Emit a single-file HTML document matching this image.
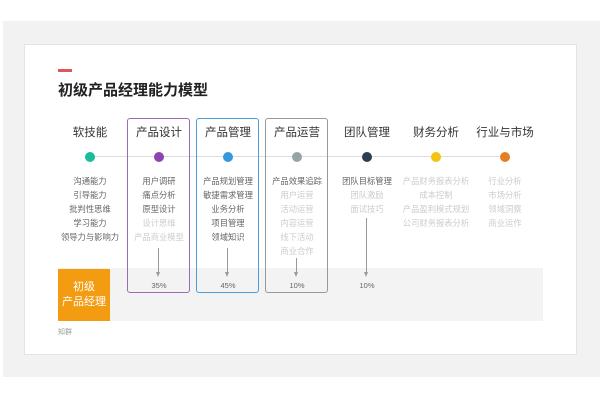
<!DOCTYPE html><html><head><meta charset="utf-8"><style>
*{margin:0;padding:0;box-sizing:border-box}
body{width:600px;height:400px;background:#fff;position:relative;overflow:hidden;font-family:"Liberation Sans","Noto Sans CJK SC",sans-serif}
.a{position:absolute}
.band{left:3px;top:21px;width:597px;height:356px;background:#f2f2f2}
.card{left:24px;top:44px;width:553px;height:311px;background:#fff;border:1px solid #e4e4e4}
.h{width:80px;text-align:center;font-size:11.5px;color:#333;top:124px}
.dot{width:10px;height:10px;border-radius:50%;top:152px}
.it{width:90px;text-align:center;font-size:8.3px;line-height:14px;top:174px;color:#666}
.lt{color:#ccc}
.box{top:118px;width:63px;height:175px;border:1.5px solid;border-radius:3px}
.vl{width:1px;background:#999}
.ah{width:0;height:0;border-left:2.5px solid transparent;border-right:2.5px solid transparent;border-top:5px solid #999}
.pc{font-size:7.5px;color:#666;width:60px;text-align:center;top:281px}
</style></head><body>
<div class="a band"></div>
<div class="a card"></div>
<div class="a" style="left:58px;top:69px;width:14px;height:3px;background:#e0575b"></div>
<div class="a" style="left:58px;top:79px;font-size:15px;font-weight:bold;color:#222">初级产品经理能力模型</div>
<div class="a" style="left:58px;top:268px;width:485px;height:53px;background:#f3f3f3"></div>
<div class="a" style="left:58px;top:269px;width:52px;height:52px;background:#f39c12;color:#fff;font-size:11px;line-height:15px;text-align:center;padding-top:11px">初级<br>产品经理</div>
<div class="a" style="left:58px;top:327px;font-size:7px;color:#999">知群</div>
<div class="a" style="left:95px;top:156px;width:410px;height:1px;background:#ddd"></div>
<div class="a box" style="left:127px;border-color:#9b6bb3"></div>
<div class="a box" style="left:196px;border-color:#4a9fd8"></div>
<div class="a box" style="left:265px;border-color:#999"></div>
<div class="a h" style="left:50px">软技能</div>
<div class="a h" style="left:119px">产品设计</div>
<div class="a h" style="left:188px">产品管理</div>
<div class="a h" style="left:257px">产品运营</div>
<div class="a h" style="left:327px">团队管理</div>
<div class="a h" style="left:396px">财务分析</div>
<div class="a h" style="left:465px">行业与市场</div>
<div class="a dot" style="left:85px;background:#1abc9c"></div>
<div class="a dot" style="left:154px;background:#8e44ad"></div>
<div class="a dot" style="left:223px;background:#3498db"></div>
<div class="a dot" style="left:292px;background:#95a5a6"></div>
<div class="a dot" style="left:362px;background:#2c3e50"></div>
<div class="a dot" style="left:431px;background:#f1c40f"></div>
<div class="a dot" style="left:500px;background:#e67e22"></div>
<div class="a it" style="left:45px">沟通能力<br>引导能力<br>批判性思维<br>学习能力<br>领导力与影响力</div>
<div class="a it" style="left:114px">用户调研<br>痛点分析<br>原型设计<br><span class="lt">设计思维<br>产品商业模型</span></div>
<div class="a it" style="left:183px">产品规划管理<br>敏捷需求管理<br>业务分析<br>项目管理<br>领域知识</div>
<div class="a it" style="left:252px">产品效果追踪<br><span class="lt">用户运营<br>活动运营<br>内容运营<br>线下活动<br>商业合作</span></div>
<div class="a it" style="left:322px">团队目标管理<br><span class="lt">团队激励<br>面试技巧</span></div>
<div class="a it lt" style="left:391px">产品财务报表分析<br>成本控制<br>产品盈利模式规划<br>公司财务报表分析</div>
<div class="a it lt" style="left:460px">行业分析<br>市场分析<br>领域洞察<br>商业运作</div>
<div class="a vl" style="left:158px;top:248px;height:25px"></div><div class="a ah" style="left:156px;top:272px"></div>
<div class="a vl" style="left:227px;top:248px;height:25px"></div><div class="a ah" style="left:225px;top:272px"></div>
<div class="a vl" style="left:296px;top:258px;height:15px"></div><div class="a ah" style="left:294px;top:272px"></div>
<div class="a vl" style="left:366px;top:218px;height:55px"></div><div class="a ah" style="left:364px;top:272px"></div>
<div class="a pc" style="left:129px">35%</div>
<div class="a pc" style="left:198px">45%</div>
<div class="a pc" style="left:267px">10%</div>
<div class="a pc" style="left:337px">10%</div>
</body></html>
